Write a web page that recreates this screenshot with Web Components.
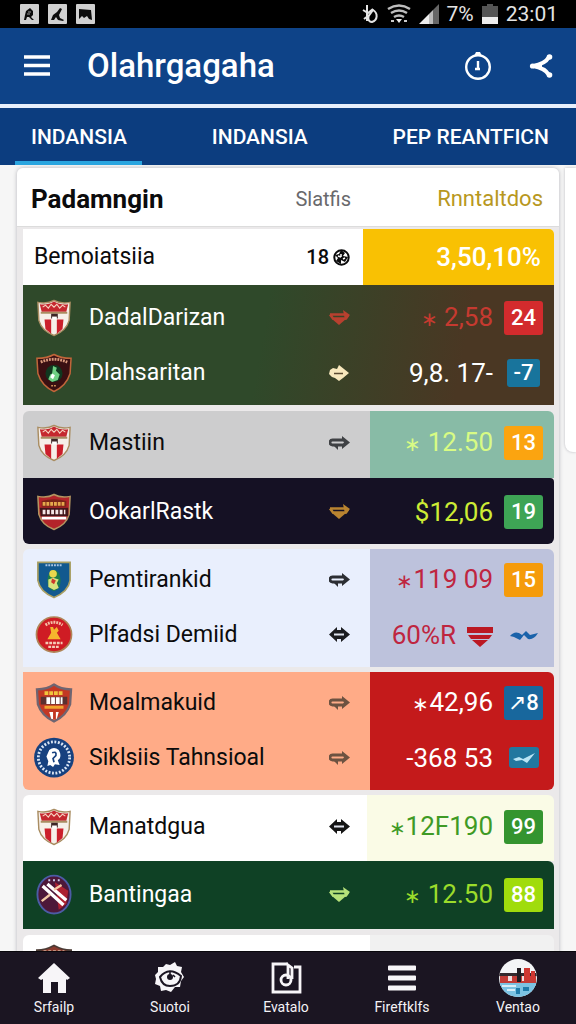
<!DOCTYPE html>
<html lang="id">
<head>
<meta charset="utf-8">
<meta name="viewport" content="width=device-width, initial-scale=1">
<title>Olahrgagaha</title>
<style>
  html, body { margin: 0; height: 100%; }
  body { font-family: Roboto, "Liberation Sans", sans-serif; background: #f6f6f6; color: #0b0b0c; }
</style>
</head>
<body>
<sport-app></sport-app>

<script>
const svg = (box, body, w, h) => `<svg viewBox="${box}" width="${w}" height="${h || w}" aria-hidden="true">${body}</svg>`;

const define = (name, html) => customElements.define(name, class extends HTMLElement {
  constructor() {
    super();
    this.attachShadow({ mode: 'open' }).innerHTML = typeof html === 'function' ? html(this) : html;
  }
});

/* ---------- status bar ---------- */
define('status-bar', `
<style>
  :host { display: flex; flex: none; justify-content: space-between; align-items: center; height: 28px; padding: 0 18px 0 20px; box-sizing: border-box; background: #000; color: #e4e4e4; font-size: 21px; line-height: 24px; }
  div { display: flex; align-items: center; height: 24px; }
  .l { gap: 9px; } .r { gap: 8px; }
  svg { display: block; }
</style>
<div class="l">
  ${svg('0 0 19 20', '<rect width="19" height="20" rx="1" fill="#d0d0d0"/><path d="M4 16l1-5 1-4 4-3 3 3 0 4-2 2 3 3-2 0-3-3-2 0-1 3z" fill="#0c0c0c"/><path d="M8 8h3M7 10h3" stroke="#999"/>', 19, 20)}
  ${svg('0 0 19 20', '<rect width="19" height="20" rx="1" fill="#d0d0d0"/><path d="M3 16l2-5 4-3 3-4 2 1-3 6 1 3 4 2-1 1-5-1-2-3-2 3z" fill="#0c0c0c"/>', 19, 20)}
  ${svg('0 0 19 20', '<rect width="19" height="20" rx="1" fill="#d0d0d0"/><path d="M3 5l12 1 1 10-3-1-2-3-3 2-2-2-3 3z" fill="#0c0c0c"/>', 19, 20)}
</div>
<div class="r">
  ${svg('0 0 18 22', '<g fill="none" stroke="#e4e4e4" stroke-width="2"><path d="M6 2v16M2 7l5 3 5-4M3 16l4-3"/><path d="M12 7c5 3 5 10-1 12-4 0-5-5-2-8z"/></g>', 18, 22)}
  ${svg('0 0 24 20', '<g fill="none" stroke="#bdbdbd" stroke-width="2.4"><path d="M1 5q11-7 22 0"/><path d="M4 9q8-5 16 0"/><path d="M7 13q5-3 10 0"/></g><path d="M9 15h6l-3 4z" fill="#eee"/><path d="M4 17h3M17 17h3" stroke="#ccc" stroke-width="2"/>', 24, 20)}
  ${svg('0 0 20 20', '<path d="M0 20L10 10v10z" fill="#eee"/><path d="M10 10l4-4v14h-4z" fill="#bbb"/><path d="M14 6l6-6v20h-6z" fill="#666"/>', 20, 20)}
  <span>7%</span>
  ${svg('0 0 16 20', '<path d="M5 0h6v2h5v11H0V2h5z" fill="#555"/><path d="M0 13h16v7H0z" fill="#eee"/>', 16, 20)}
  <span>23:01</span>
</div>`);

/* ---------- app bar ---------- */
define('app-bar', `
<style>
  :host { display: flex; flex: none; align-items: center; height: 76px; padding: 0 18px 0 20px; background: #0e4388; border-bottom: 4px solid #e8f0fc; color: #fff; }
  h1 { flex: 1; margin: 0 0 0 33px; font-size: 33px; line-height: 40px; font-weight: 500; }
  button { display: flex; justify-content: center; width: 34px; padding: 0; border: 0; background: none; color: inherit; }
  button + button, h1 + button + button { margin-left: 29px; }
</style>
<button aria-label="Menu">${svg('0 0 26 22', '<path d="M0 2h26M0 10.500h26M0 19h26" stroke="#fff" stroke-width="3.400"/>', 26, 22)}</button>
<h1>Olahrgagaha</h1>
<button aria-label="Waktu">${svg('0 0 28 28', '<g fill="none" stroke="#fff" stroke-width="2.400"><circle cx="14" cy="15" r="11.800"/><path d="M14 9v8M11 17h5"/></g><path d="M12 0h4l2 4h-8z" fill="#fff"/>', 28)}</button>
<button aria-label="Bagikan">${svg('0 0 24 26', '<path d="M20 4Q16 11 4 13Q16 15 20 22" fill="none" stroke="#fff" stroke-width="4" stroke-linecap="round"/><path d="M9 12h4v2H9z" fill="#fff"/><circle cx="3.500" cy="13" r="2.600" fill="#fff"/><circle cx="20.500" cy="4" r="2.800" fill="#fff"/><circle cx="20.500" cy="22" r="2.800" fill="#fff"/>', 24, 26)}</button>`);

/* ---------- tabs ---------- */
define('tab-strip', `
<style>
  :host { display: block; flex: none; background: #0c3d7f; }
  nav { display: flex; justify-content: space-between; padding: 0 12px 0 15px; }
  a { box-sizing: border-box; height: 57px; padding: 5px 15px 0 16px; border-bottom: 4px solid transparent; color: #fff; font-size: 21px; line-height: 48px; font-weight: 500; text-decoration: none; white-space: nowrap; }
  a[aria-current] { border-color: #2aa5df; }
</style>
<nav>
  <a href="#satu" aria-current="page">INDANSIA</a>
  <a href="#dua">INDANSIA</a>
  <a href="#tiga">PEP REANTFICN</a>
</nav>`);

/* ---------- crests ---------- */
const shield = 'M2 3Q12 5 19 1Q26 5 36 3L35 22Q32 33 19 38Q6 33 3 22Z';
const crests = {
  stripe: `<path d="${shield}" fill="#f6efe9" stroke="#a98d62" stroke-width="1.5"/>
    <path d="M4 5q9 1 15-3 6 4 15 3l-2 8H6z" fill="#c5282f"/><path d="M7 8l3-2 3 3 3-4 3 3 3-3 3 4 3-3 3 2" fill="none" stroke="#f7d4c2" stroke-width="1.2"/>
    <path d="M5 14h28" stroke="#a98d62" stroke-width="2"/><path d="M9 21h7v15l-6-5zM22 21h7l-1 10-6 5z" fill="#cb1f2b"/><path d="M16 15h7v5h-7z" fill="#3c2626"/><path d="M17 18h5v3h-5z" fill="#fff"/>`,
  forest: `<path d="M1 4Q12 4 19 0Q26 4 37 4L36 20Q32 33 19 39Q6 33 2 20Z" fill="#3a0f12" stroke="#c0653a" stroke-width="1.6"/>
    <path d="M5 8q14-6 28 0" fill="none" stroke="#d99a7c" stroke-width="3" stroke-dasharray="2 1"/><circle cx="19" cy="20" r="9" fill="#10371f"/>
    <path d="M18 12l4 2-1 3 4 4-2 6-6 2-4-3 2-5 2-1z" fill="#6fcf83"/><path d="M17 20l3 2-2 4-3-2z" fill="#fff"/><path d="M16 33h6" stroke="#c98a55" stroke-width="1.5" stroke-dasharray="2 1"/>`,
  brick: `<path d="${shield}" fill="#b3242a" stroke="#b39561" stroke-width="1.6"/>
    <path d="M6 8q13-4 26 0v6H6z" fill="#7a2418"/><path d="M7 11h24" stroke="#e6a94c" stroke-width="4" stroke-dasharray="3 1"/><path d="M4 15h30v9H5z" fill="#43161a"/>
    <path d="M7 19.500h24" stroke="#f3e5e5" stroke-width="5" stroke-dasharray="3 1.500"/><path d="M6 26h26" stroke="#fff" stroke-width="3"/>`,
  blue: `<path d="M2 1H36V20Q34 32 19 38Q4 32 2 20Z" fill="#12598f" stroke="#a99f63" stroke-width="1.8"/>
    <path d="M10 4h18" stroke="#a9c4e4" stroke-width="2" stroke-dasharray="2 1"/><ellipse cx="19" cy="20" rx="7" ry="11" fill="#1d7b4c"/><circle cx="18" cy="13" r="4" fill="#ead84d"/>
    <path d="M13 19l5-2 6 2-2 4 2 5-5 2-6-3z" fill="#d8e37d"/><path d="M17 18l4 2-2 4-3-2z" fill="#cc3a2b"/>`,
  ring: `<circle cx="19" cy="19" r="18.500" fill="#cf1c24" stroke="#b08457" stroke-width="1.8"/>
    <path d="M10 9q9-6 18 0" fill="none" stroke="#f5c0a6" stroke-width="3" stroke-dasharray="2 1"/><path d="M15 11h3l1 3 3-3 2 4-2 2 4 7H12l4-7z" fill="#f5b62d"/>
    <path d="M10 28h18M13 32h12" stroke="#f5cbb6" stroke-width="2.5" stroke-dasharray="3 1"/>`,
  gold: `<path d="M1 5Q12 5 19 0Q26 5 37 5L36 21Q32 33 19 39Q6 33 2 21Z" fill="#c33824" stroke="#6f6571" stroke-width="2.4"/>
    <path d="M9 9h20" stroke="#f1c43c" stroke-width="4" stroke-dasharray="4 1"/><path d="M5 13h28v8H5z" fill="#5b3030"/><path d="M11 17h17" stroke="#fff" stroke-width="7" stroke-dasharray="4 1"/>
    <path d="M9 24h20" stroke="#f0a52f" stroke-width="3"/><path d="M14 29h10l-2 7-3 1-3-1z" fill="#fff"/><path d="M18 29h3v8h-3z" fill="#c33824"/>`,
  navy: `<circle cx="19" cy="19" r="21" fill="#17417f"/><circle cx="19" cy="19" r="16.500" fill="none" stroke="#dbe6f5" stroke-width="3" stroke-dasharray="2 1.700"/>
    <path d="M14 11q5-4 10 0 3 5 1 9l-2 2 2 5-5-1-2 3-3-2-3 1 1-5-2-5z" fill="#fff"/><path d="M17 14q5-2 4 3l-3 3 1 4" fill="none" stroke="#17417f" stroke-width="1.800"/>`,
  sash: `<ellipse cx="19" cy="19" rx="17.500" ry="20" fill="#4d1839" stroke="#4c5ba5" stroke-width="2"/>
    <path d="M20 6l14 9-2 14-8 6z" fill="#ac2131"/><path d="M7 10l22 20M12 8l20 17" stroke="#fff" stroke-width="3.500"/><path d="M6 26l9-7M19 14l8-5" stroke="#f3c9a5" stroke-width="2.500"/><path d="M13 4h12" stroke="#cfd0ee" stroke-width="2" stroke-dasharray="2 3"/>`,
  dusk: `<path d="M1 5Q10 5 19 0Q28 5 37 5L36 21Q32 33 19 39Q6 33 2 21Z" fill="#8a3b2e" stroke="#4a3b35" stroke-width="2"/><path d="M8 6h22" stroke="#d2b09b" stroke-width="2" stroke-dasharray="3 2"/>`
};
define('club-crest', el => `<style>:host { display: block; } svg { display: block; margin: auto; overflow: visible; }</style>` +
  svg('0 0 38 39', crests[el.getAttribute('kind')], 36, 38));

/* ---------- trend arrow ---------- */
const arrows = {
  open: '<path d="M14 6H3.500a2 2 0 0 0 0 5H15" fill="none" stroke="currentColor" stroke-width="2.800"/><path d="M13 2l8 6.500-8 6.500v-4l2-2.500-2-2.500z" fill="currentColor"/><path d="M4 11l5 5v-5z" fill="currentColor"/>',
  down: '<path d="M1 5.500h16M1 5.500l3 4h13l2-3" fill="none" stroke="currentColor" stroke-width="2.600"/><path d="M14 1l7 5-5 5z" fill="currentColor"/><path d="M3 10h14l-7 6z" fill="currentColor"/>',
  solid: '<path d="M1 6l3-2 4 1 2-4 10 8-6 5-4 3-4-3-3-1-3-3z" fill="currentColor"/><path d="M5 9.500h9" stroke="#5b4a31" stroke-width="1.500"/>',
  both: '<path d="M0 8.500L8 1v3h4V1l9 7.500-9 7.500v-3H8v3z" fill="currentColor"/><path d="M5 8.500h10" stroke="#dfe3ee" stroke-width="2"/>'
};
define('trend-arrow', el => `<style>:host { display: block; } svg { display: block; margin: auto; }</style>` +
  svg('0 0 21 17', arrows[el.getAttribute('kind')], 21, 17));

/* ---------- score badge ---------- */
define('score-badge', `
<style>
  :host { display: flex; box-sizing: border-box; align-items: center; justify-content: center; width: 39px; height: 34px; margin: auto; border-radius: 3px; background: var(--fill, transparent); color: #fff; font-size: 22px; line-height: 26px; font-weight: 500; }
  :host([small]) { width: 33px; height: 28px; }
  :host([low]) { width: 30px; height: 21px; }
</style><slot></slot>`);

/* ---------- group of clubs ---------- */
define('club-group', el => {
  const rows = JSON.parse(el.querySelector('script').textContent);
  return `
<style>
  :host { display: block; box-sizing: border-box; overflow: hidden; padding: 5px 0; }
  table { width: 100%; table-layout: fixed; border-collapse: collapse; }
  .c { width: 62px; } .a { width: 62px; } .v { width: 123px; } .b { width: 61px; }
  tr { height: 55px; }
  td, th { padding: 0; text-align: left; vertical-align: middle; font-weight: 400; white-space: nowrap; }
  th { padding-left: 4px; font-size: 23px; line-height: 32px; }
  td.val { text-align: right; font-size: 26px; line-height: 32px; }
  td.val svg { vertical-align: middle; margin-left: 11px; }
  .star { font-size: 20px; }
</style>
<table><colgroup><col class="c"><col><col class="a"><col class="v"><col class="b"></colgroup><tbody>` +
  rows.map(r => `<tr><td><club-crest kind="${r.crest}"></club-crest></td><th scope="row">${r.name}</th>
    <td style="color:${r.ac}"><trend-arrow kind="${r.arrow}"></trend-arrow></td>
    <td class="val" style="color:${r.vc}">${r.value.replace('∗', '<span class="star">∗</span>')}${r.mark ? svg('0 0 26 20', '<path d="M0 0h26v6H0zM1 8h24l-3 4H4zM5 13h16l-8 7z" fill="#bb1822"/>', 26, 20) : ''}</td>
    <td>${r.glyph ? `<score-badge low style="--fill:${r.fill}">${svg('0 0 28 16', r.glyph === 'wave'
      ? '<path d="M0 9q4-5 9-3l3 2 4-4 4 4 8-2q-4 7-10 6l-4-4-4 5-6-3z" fill="#1a62aa"/>'
      : '<path d="M3 9l6-2 4 2 12-6-8 10-5-3-6 1z" fill="#b9e4f5"/>', 28, 16)}</score-badge>`
      : `<score-badge ${r.small ? 'small' : ''} style="--fill:${r.fill}">${r.badge}</score-badge>`}</td></tr>`).join('') +
  `</tbody></table>`;
});

/* ---------- summary row ---------- */
define('summary-row', `
<style>
  :host { display: block; background: #fff; overflow: hidden; border-top-right-radius: 5px; }
  table { width: 100%; table-layout: fixed; border-collapse: collapse; }
  th, td { height: 56px; padding: 0; font-weight: 400; line-height: 32px; white-space: nowrap; }
  th { padding-left: 11px; text-align: left; font-size: 23px; }
  .n { width: 72px; } .p { width: 191px; }
  .num div { display: flex; align-items: center; justify-content: flex-end; gap: 4px; padding-right: 13px; font-size: 20px; font-weight: 500; }
  .pct { padding-right: 13px; background: #f9c103; color: #fff; text-align: right; font-size: 26px; font-weight: 500; }
</style>
<table><colgroup><col><col class="n"><col class="p"></colgroup><tbody><tr>
  <th scope="row">Bemoiatsiia</th>
  <td class="num"><div>18 ${svg('0 0 17 17', '<circle cx="8.500" cy="8.500" r="7.200" fill="none" stroke="#0b0b0c" stroke-width="2"/><path d="M8 1l4 3-2 3 5 1-3 5-4-2 0 4-5-3 2-3-3-3 4-1z" fill="#0b0b0c"/><path d="M5 7l3 1M10 10l2-1M8 5v3" stroke="#fff" stroke-width="1.500"/>', 17)}</div></td>
  <td class="pct">3,50,10%</td>
</tr></tbody></table>`);

/* ---------- standings card ---------- */
const group = (cls, rows) => `<club-group class="${cls}"><script type="application/json">${JSON.stringify(rows)}<\/script></club-group>`;
define('standings-card', `
<style>
  :host { display: block; padding-bottom: 8px; border-radius: 6px 6px 0 0; background: #ebe9ea; box-shadow: 0 0 4px #b4b4ba; }
  header { display: flex; align-items: center; height: 59px; padding: 4px 16px 0 14px; box-sizing: border-box; background: #fff; border-bottom: 1px solid #dcdcdc; border-radius: 6px 6px 0 0; }
  h2 { flex: 1; margin: 0; font-size: 26px; line-height: 34px; font-weight: 700; }
  header span { font-size: 20px; line-height: 30px; color: #69696c; }
  header span + span { width: 192px; text-align: right; font-size: 22px; color: #b8981e; }
  .rows { padding: 2px 5px 0 6px; }
  club-group { --split: 184px; background: linear-gradient(to left, var(--side) var(--split), var(--base) var(--split)); }
  .olive { background: linear-gradient(100deg, #2f492a 45%, #4a3723 82%); }
  .grey { --base: #cdcdce; --side: #88bba6; margin-top: 6px; padding: 4px 0 8px; border-radius: 6px 6px 0 0; }
  .ink { --base: #151124; --side: #151124; color: #fff; padding: 6px 0 5px; border-radius: 0 4px 6px 6px; }
  .olive, .pine { color: #fff; }
  .ice { --base: #e9effd; --side: #bdc2dc; margin-top: 5px; padding: 3px 0 5px; border-radius: 6px 6px 0 0; }
  .peach { --base: #ffab87; --side: #c41a1b; margin-top: 5px; padding: 3px 0 5px; border-radius: 0 6px 6px 6px; }
  .cream { --split: 187px; --base: #fff; --side: #fafbe6; margin-top: 5px; padding: 4px 0 7px; border-radius: 6px 6px 0 0; }
  .pine { --base: #0f4125; --side: #0f4125; padding: 6px 0 7px; border-top-right-radius: 6px; }
  .last { --base: #fff; --side: #f1f1f1; margin-top: 6px; padding: 1px 0 6px; border-radius: 6px; }
</style>
<header><h2>Padamngin</h2><span>Slatfis</span><span>Rnntaltdos</span></header>
<div class="rows">
<summary-row></summary-row>` +
group('olive', [
  { crest: 'stripe', name: 'DadalDarizan', arrow: 'down', ac: '#b8402f', value: '∗ 2,58', vc: '#c63a30', badge: '24', fill: '#d32b2d' },
  { crest: 'forest', name: 'Dlahsaritan', arrow: 'solid', ac: '#f8e8bd', value: '9,8. 17-', vc: '#fff', badge: '-7', fill: '#18749c', small: true }]) +
group('grey', [{ crest: 'stripe', name: 'Mastiin', arrow: 'open', ac: '#3f4144', value: '∗ 12.50', vc: '#d8fb84', badge: '13', fill: '#fba410' }]) +
group('ink', [{ crest: 'brick', name: 'OokarlRastk', arrow: 'down', ac: '#b98430', value: '$12,06', vc: '#cdec35', badge: '19', fill: '#3ea455' }]) +
group('ice', [
  { crest: 'blue', name: 'Pemtirankid', arrow: 'open', ac: '#2c2e33', value: '∗119 09', vc: '#bf2540', badge: '15', fill: '#f59b0b' },
  { crest: 'ring', name: 'Plfadsi Demiid', arrow: 'both', ac: '#1b1c20', value: '60%R', vc: '#bf2540', mark: true, glyph: 'wave', fill: 'transparent' }]) +
group('peach', [
  { crest: 'gold', name: 'Moalmakuid', arrow: 'open', ac: '#6d5241', value: '∗42,96', vc: '#fff', badge: '↗8', fill: '#18679d' },
  { crest: 'navy', name: 'Siklsiis Tahnsioal', arrow: 'open', ac: '#6d5241', value: '-368 53', vc: '#fff', glyph: 'bird', fill: '#22779f' }]) +
group('cream', [{ crest: 'stripe', name: 'Manatdgua', arrow: 'both', ac: '#151515', value: '∗12F190', vc: '#3f9a25', badge: '99', fill: '#34942f' }]) +
group('pine', [{ crest: 'sash', name: 'Bantingaa', arrow: 'down', ac: '#b6e17a', value: '∗ 12.50', vc: '#9bdc2b', badge: '88', fill: '#a0dc0c' }]) +
group('last', [{ crest: 'dusk', name: 'Bamdmgaa', arrow: 'open', ac: '#222', value: '', vc: '#222', badge: '', fill: 'transparent' }]) +
`</div>`);

/* ---------- bottom navigation ---------- */
define('nav-item', `
<style>
  :host { display: block; flex: 1; }
  a { display: flex; flex-direction: column; align-items: center; gap: 2px; padding-top: 9px; color: #f4f2f6; font-size: 14px; line-height: 20px; text-decoration: none; }
  .icon { display: flex; align-items: center; justify-content: center; height: 34px; }
</style>
<a href="#"><span class="icon"><slot name="icon"></slot></span><slot></slot></a>`);
define('bottom-nav', `
<style>
  :host { display: block; flex: none; overflow: hidden; background: #1b1522; border-top: 1px solid #09070c; }
  nav { display: flex; height: 72px; margin-left: -4px; }
  svg { display: block; }
</style>
<nav>
  <nav-item><svg slot="icon" viewBox="0 0 32 30" width="32" height="30"><path d="M16 0L32 15l-3 2-1-1v14h-8V19h-7v11H5V16l-2 1-3-2z" fill="#f7f5f8"/></svg>Srfailp</nav-item>
  <nav-item><svg slot="icon" viewBox="0 0 30 32" width="30" height="32"><path d="M11 2l4 1 5-3 2 4 5 1-1 5 3 5-3 4-1 6-5 0-4 5-5-2-5 1-1-5-5-2 1-5-1-4 3-3 0-5 5 0z" fill="#f7f5f8"/><path d="M5 15q9-11 21-1-1 10-11 10-8 0-10-9z" fill="none" stroke="#1b1522" stroke-width="2"/><circle cx="15" cy="15" r="3" fill="#1b1522"/><path d="M15 10v5M18 13l2 2" stroke="#1b1522" stroke-width="1.600"/></svg>Suotoi</nav-item>
  <nav-item><svg slot="icon" viewBox="0 0 32 32" width="32" height="32"><g fill="none" stroke="#f7f5f8" stroke-width="2.800"><path d="M18 2H3v28h27V5h-6"/><path d="M18 17V3l4 3v11"/><circle cx="16" cy="18" r="5"/></g></svg>Evatalo</nav-item>
  <nav-item><svg slot="icon" viewBox="0 0 28 26" width="28" height="26"><path d="M1 0.500h26q1 0 1 1v3q0 1-1 1H1q-1 0-1-1v-3q0-1 1-1zM1 10.500h26q1 0 1 1v3q0 1-1 1H1q-1 0-1-1v-3q0-1 1-1zM1 20.500h26q1 0 1 1v3q0 1-1 1H1q-1 0-1-1v-3q0-1 1-1z" fill="#f7f5f8"/></svg>Fireftklfs</nav-item>
  <nav-item><svg slot="icon" viewBox="0 0 38 38" width="38" height="38"><clipPath id="p"><circle cx="19" cy="19" r="19"/></clipPath><g clip-path="url(#p)"><path d="M0 0h38v38H0z" fill="#f4f5f7"/><path d="M0 14h38v3H0z" fill="#34292d"/><path d="M1 17h36v7H1z" fill="#c33c37"/><path d="M25 9h6v12h-6zM32 12h4v9h-4z" fill="#cf3832"/><path d="M18 9h4v14h-4z" fill="#201c22"/><path d="M9 17h4v5H9zM23 17h2v5h-2z" fill="#f2dfe0"/><path d="M0 24h38v14H0z" fill="#7cc3e3"/><path d="M3 27h14M8 31h8" stroke="#d8eef8" stroke-width="2"/><path d="M17 29h4v6h-4zM24 28h6v4h-6z" fill="#1e7cab"/></g></svg>Ventao</nav-item>
</nav>`);

/* ---------- app shell ---------- */
define('sport-app', `
<style>
  :host { display: flex; flex-direction: column; height: 100vh; min-width: 480px; }
  main { flex: 1; min-height: 0; overflow: hidden; display: grid; grid-template-columns: 1fr 11px; column-gap: 6px; align-items: start; padding: 3px 0 0 17px; background: #f6f6f6; }
  aside { height: 284px; border-radius: 0 0 0 8px; background: #fff; box-shadow: 0 0 3px #b8b8be; }
</style>
<status-bar></status-bar>
<app-bar></app-bar>
<tab-strip></tab-strip>
<main><standings-card></standings-card><aside aria-label="Panel"></aside></main>
<bottom-nav></bottom-nav>`);
</script>
</body>
</html>
